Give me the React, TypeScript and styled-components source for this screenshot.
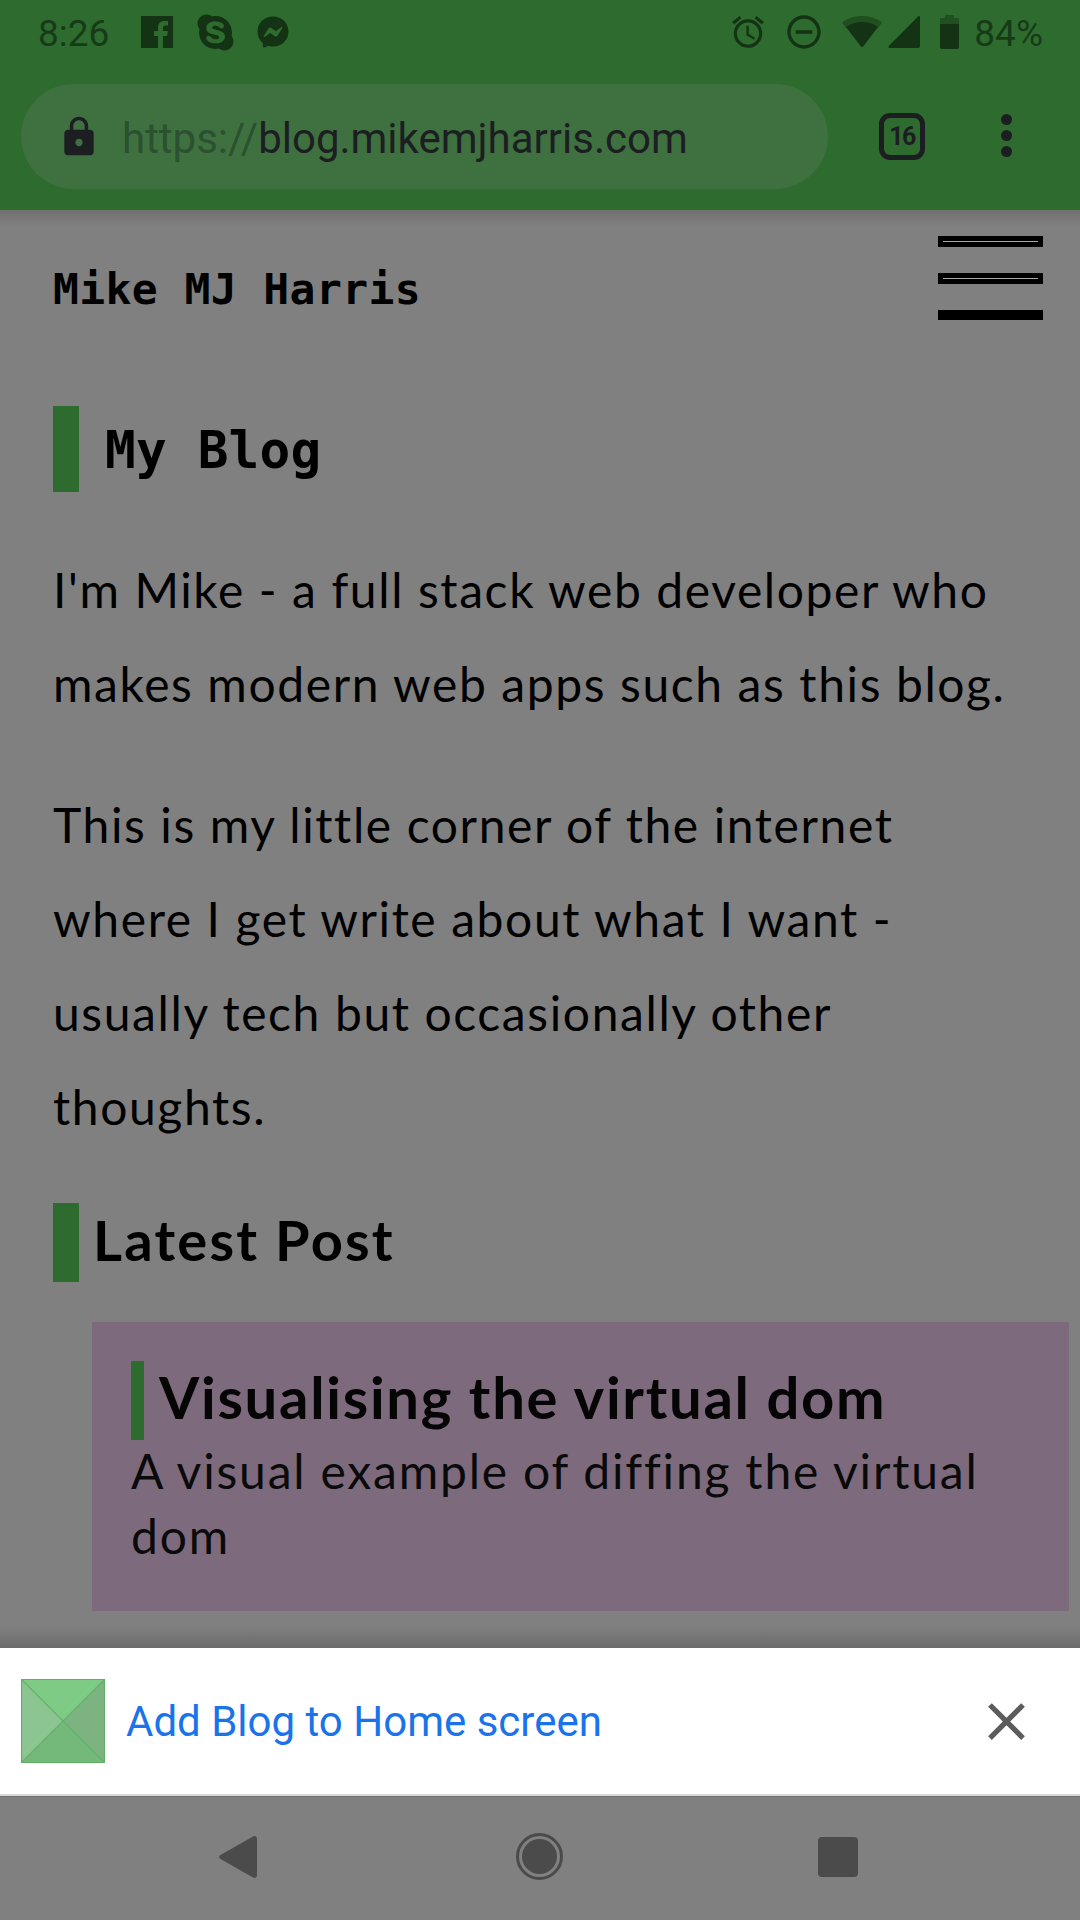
import React from "react";
import styled, { createGlobalStyle } from "styled-components";
import { FaFacebookMessenger, FaSkype } from "react-icons/fa";
import { MdAccessAlarm, MdClose, MdLock, MdRemoveCircleOutline } from "react-icons/md";

const GlobalStyle = createGlobalStyle`
  html, body {
    margin: 0;
    padding: 0;
    background: #808080;
  }
`;

const Screen = styled.div`
  width: 1080px;
  height: 1920px;
  display: flex;
  flex-direction: column;
  overflow: hidden;
  background: #808080;
  color: #000;
  font-family: Lato, "Open Sans", sans-serif;
`;

const Chrome = styled.header`
  height: 210px;
  flex: none;
  background: #2e6b2e;
`;

const StatusBar = styled.div`
  height: 70px;
  display: flex;
  align-items: flex-start;
  justify-content: space-between;
  padding: 14px 37px 0 38px;
  box-sizing: border-box;
  color: #143314;
`;

const StatusGroup = styled.div`
  display: flex;
  align-items: center;
  height: 36px;
`;

const StatusText = styled.span<{ $left?: number }>`
  margin-left: ${(p) => p.$left ?? 0}px;
  padding-top: 3px;
  font-family: Roboto, sans-serif;
  font-size: 37px;
  line-height: 36px;
  color: #173b18;
`;

const StatusIcon = styled.span<{ $left: number; $size: number; $width?: number }>`
  display: flex;
  margin-left: ${(p) => p.$left}px;
  color: #143314;
  svg {
    width: ${(p) => p.$width ?? p.$size}px;
    height: ${(p) => p.$size}px;
    display: block;
  }
`;

const Toolbar = styled.div`
  height: 140px;
  display: flex;
  align-items: flex-start;
  padding: 14px 0 0 21px;
  box-sizing: border-box;
`;

const UrlPill = styled.div`
  width: 807px;
  height: 105px;
  border-radius: 53px;
  background: #3f7040;
  display: flex;
  align-items: center;
  padding-left: 36px;
  box-sizing: border-box;
  color: #1c1e21;
  svg {
    width: 44px;
    height: 44px;
    flex: none;
  }
`;

const UrlText = styled.span`
  margin-left: 21px;
  padding-top: 5px;
  font-family: Roboto, sans-serif;
  font-size: 42px;
  line-height: 48px;
  color: #1c1e21;
`;

const UrlScheme = styled.span`
  color: #2b5130;
`;

const TabCount = styled.div`
  margin: 29px 0 0 51px;
  width: 46px;
  height: 47px;
  box-sizing: border-box;
  border: 5px solid #1c1e21;
  border-radius: 11px;
  display: flex;
  align-items: center;
  justify-content: center;
  font-family: Roboto, sans-serif;
  font-weight: 700;
  font-size: 25px;
  letter-spacing: -1.5px;
  color: #1c1e21;
`;

const MenuDots = styled.div`
  margin: 30px 0 0 76px;
  display: flex;
  flex-direction: column;
  gap: 5px;
`;

const Dot = styled.span`
  width: 11px;
  height: 11px;
  border-radius: 50%;
  background: #1c1e21;
`;

const Page = styled.main`
  flex: 1;
  min-height: 0;
  padding-left: 53px;
  overflow: hidden;
  background: linear-gradient(#707070, #808080 16px);
  position: relative;
  &::after {
    content: "";
    position: absolute;
    left: 0;
    right: 0;
    bottom: 0;
    height: 22px;
    background: linear-gradient(rgba(0, 0, 0, 0), rgba(0, 0, 0, 0.16));
  }
`;

const SiteHeader = styled.div`
  height: 84px;
  margin-top: 26px;
  padding-right: 37px;
  display: flex;
  justify-content: space-between;
  align-items: flex-start;
`;

const SiteTitle = styled.div`
  margin-top: 26px;
  font-family: "DejaVu Sans Mono", monospace;
  font-weight: 700;
  font-size: 43px;
  letter-spacing: 0.4px;
  line-height: 54px;
`;

const Burger = styled.div`
  width: 105px;
  display: flex;
  flex-direction: column;
  gap: 26px;
`;

const BurgerBar = styled.span<{ $lined?: boolean }>`
  height: ${(p) => (p.$lined ? 11 : 10)}px;
  background: #000;
  display: block;
  position: relative;
  &::after {
    content: "";
    display: ${(p) => (p.$lined ? "block" : "none")};
    position: absolute;
    left: 5px;
    right: 5px;
    top: 5px;
    height: 1px;
    background: #a8a8a8;
  }
`;

const PageTitle = styled.h1`
  margin: 86px 0 51px;
  height: 86px;
  border-left: 26px solid #2e6b2e;
  padding-left: 26px;
  font-family: "DejaVu Sans Mono", monospace;
  font-weight: 700;
  font-size: 51px;
  letter-spacing: 0.2px;
  line-height: 90px;
`;

const Paragraph = styled.p`
  margin: 0 0 47px;
  width: 975px;
  font-size: 48px;
  letter-spacing: 1.6px;
  line-height: 94px;
`;

const SectionTitle = styled.h2`
  margin: 49px 0 40px;
  height: 79px;
  border-left: 26px solid #2e6b2e;
  padding-left: 14px;
  font-weight: 700;
  font-size: 56px;
  letter-spacing: 2.2px;
  line-height: 74px;
`;

const PostCard = styled.article`
  margin: 0 11px 0 39px;
  padding: 39px 39px 41px;
  background: #7d6a7d;
`;

const PostTitle = styled.h3`
  margin: 0;
  height: 79px;
  border-left: 13px solid #2e6b2e;
  padding-left: 15px;
  font-weight: 700;
  font-size: 58px;
  letter-spacing: 1.7px;
  line-height: 71px;
  color: #050505;
`;

const PostText = styled.p`
  margin: -2px 0 2px;
  font-size: 48px;
  letter-spacing: 1.8px;
  line-height: 65px;
  color: #0a0a0a;
`;

const InstallBanner = styled.section`
  height: 146px;
  flex: none;
  background: #fff;
  display: flex;
  align-items: center;
  padding: 0 42px 0 21px;
  box-sizing: border-box;
  svg {
    display: block;
    flex: none;
  }
`;

const BannerText = styled.span`
  margin-left: 21px;
  flex: 1;
  font-family: Roboto, sans-serif;
  font-size: 42px;
  color: #1a73e8;
`;

const NavBar = styled.nav`
  height: 126px;
  flex: none;
  border-top: 2px solid #d8d8d8;
  box-shadow: inset 0 1px 0 #707070;
  box-sizing: border-box;
  display: flex;
  align-items: flex-start;
  padding: 40px 0 0 219px;
  color: #4b4b4b;
`;

const HomeRing = styled.div`
  width: 47px;
  height: 47px;
  margin: -3px 255px 0 259px;
  box-sizing: border-box;
  border: 3px solid #4b4b4b;
  border-radius: 50%;
  padding: 3px;
  &::before {
    content: "";
    display: block;
    width: 100%;
    height: 100%;
    border-radius: 50%;
    background: #4b4b4b;
  }
`;

const RecentSquare = styled.div`
  width: 40px;
  height: 40px;
  margin-top: 1px;
  border-radius: 4px;
  background: #4b4b4b;
`;

const Facebook = () => (
  <svg viewBox="0 0 32 32">
    <path
      fill="currentColor"
      fillRule="evenodd"
      d="M0 0h32v32H22v-12h4.2l.6-5H22v-3c0-1.5.5-2.5 2.5-2.5H27V5.2c-.5 0-2-.2-3.6-.2-3.6 0-6.4 2.2-6.4 6.300V15h-4v5h4v12H0z"
    />
  </svg>
);

const Wifi = () => (
  <svg viewBox="0 0 40 32">
    <path fill="#20501f" d="M0 6.500C5 2.500 12 0 20 0s15 2.500 20 6.500L36 12H4z" />
    <path fill="currentColor" d="M4 11C8.500 7.500 14 6 20 6s11.500 1.500 16 5L21.500 30a2 2 0 0 1-3 0z" />
  </svg>
);

const Signal = () => (
  <svg viewBox="0 0 32 32">
    <path fill="currentColor" d="M30 0.500c1 -.8 2-.3 2 1V30a2 2 0 0 1-2 2H2c-1.500 0-2-1.200-1-2.200z" />
  </svg>
);

const Battery = () => (
  <svg viewBox="0 0 19 34">
    <path fill="#20501f" d="M5 0h9v3h4a1 1 0 0 1 1 1v5H0V4a1 1 0 0 1 1-1h4z" />
    <path fill="currentColor" d="M0 9h19v23a2 2 0 0 1-2 2H2a2 2 0 0 1-2-2z" />
  </svg>
);

const AppIcon = () => (
  <svg width="84" height="84" viewBox="0 0 84 84">
    <path fill="#7ecb85" d="M0 0h84L42 42z" />
    <path fill="#8cc592" d="M0 0v84l42-42z" />
    <path fill="#7db380" d="M84 0v84L42 42z" />
    <path fill="#74b97a" d="M0 84h84L42 42z" />
    <path stroke="#5fb066" strokeWidth="1.200" fill="none" d="M.5.500h83v83H.5zM0 0l84 84M84 0L0 84" />
  </svg>
);

const BackArrow = () => (
  <svg width="38" height="42" viewBox="0 0 38 42">
    <path fill="#4b4b4b" d="M34 .500c2-1 4 0 4 2.500v36c0 2.500-2 3.500-4 2.500L1.500 23c-2-1.200-2-2.800 0-4z" />
  </svg>
);

export default function App() {
  return (
    <Screen>
      <GlobalStyle />
      <Chrome>
        <StatusBar>
          <StatusGroup>
            <StatusText>8:26</StatusText>
            <StatusIcon $left={32} $size={32}>
              <Facebook />
            </StatusIcon>
            <StatusIcon $left={22} $size={41}>
              <FaSkype />
            </StatusIcon>
            <StatusIcon $left={21} $size={32}>
              <FaFacebookMessenger />
            </StatusIcon>
          </StatusGroup>
          <StatusGroup>
            <StatusIcon $left={0} $size={38}>
              <MdAccessAlarm />
            </StatusIcon>
            <StatusIcon $left={17} $size={40}>
              <MdRemoveCircleOutline />
            </StatusIcon>
            <StatusIcon $left={18} $size={32} $width={40}>
              <Wifi />
            </StatusIcon>
            <StatusIcon $left={6} $size={32}>
              <Signal />
            </StatusIcon>
            <StatusIcon $left={20} $size={34} $width={19}>
              <Battery />
            </StatusIcon>
            <StatusText $left={15}>84%</StatusText>
          </StatusGroup>
        </StatusBar>
        <Toolbar>
          <UrlPill>
            <MdLock />
            <UrlText>
              <UrlScheme>https://</UrlScheme>blog.mikemjharris.com
            </UrlText>
          </UrlPill>
          <TabCount>16</TabCount>
          <MenuDots>
            <Dot />
            <Dot />
            <Dot />
          </MenuDots>
        </Toolbar>
      </Chrome>
      <Page>
        <SiteHeader>
          <SiteTitle>Mike MJ Harris</SiteTitle>
          <Burger>
            <BurgerBar $lined />
            <BurgerBar $lined />
            <BurgerBar />
          </Burger>
        </SiteHeader>
        <PageTitle>My Blog</PageTitle>
        <Paragraph>
          I'm Mike - a full stack web developer who makes modern web apps such as this blog.
        </Paragraph>
        <Paragraph>
          This is my little corner of the internet where I get write about what I want - usually
          tech but occasionally other thoughts.
        </Paragraph>
        <SectionTitle>Latest Post</SectionTitle>
        <PostCard>
          <PostTitle>Visualising the virtual dom</PostTitle>
          <PostText>A visual example of diffing the virtual dom</PostText>
        </PostCard>
      </Page>
      <InstallBanner>
        <AppIcon />
        <BannerText>Add Blog to Home screen</BannerText>
        <MdClose size={63} color="#5c5c5c" />
      </InstallBanner>
      <NavBar>
        <BackArrow />
        <HomeRing />
        <RecentSquare />
      </NavBar>
    </Screen>
  );
}
